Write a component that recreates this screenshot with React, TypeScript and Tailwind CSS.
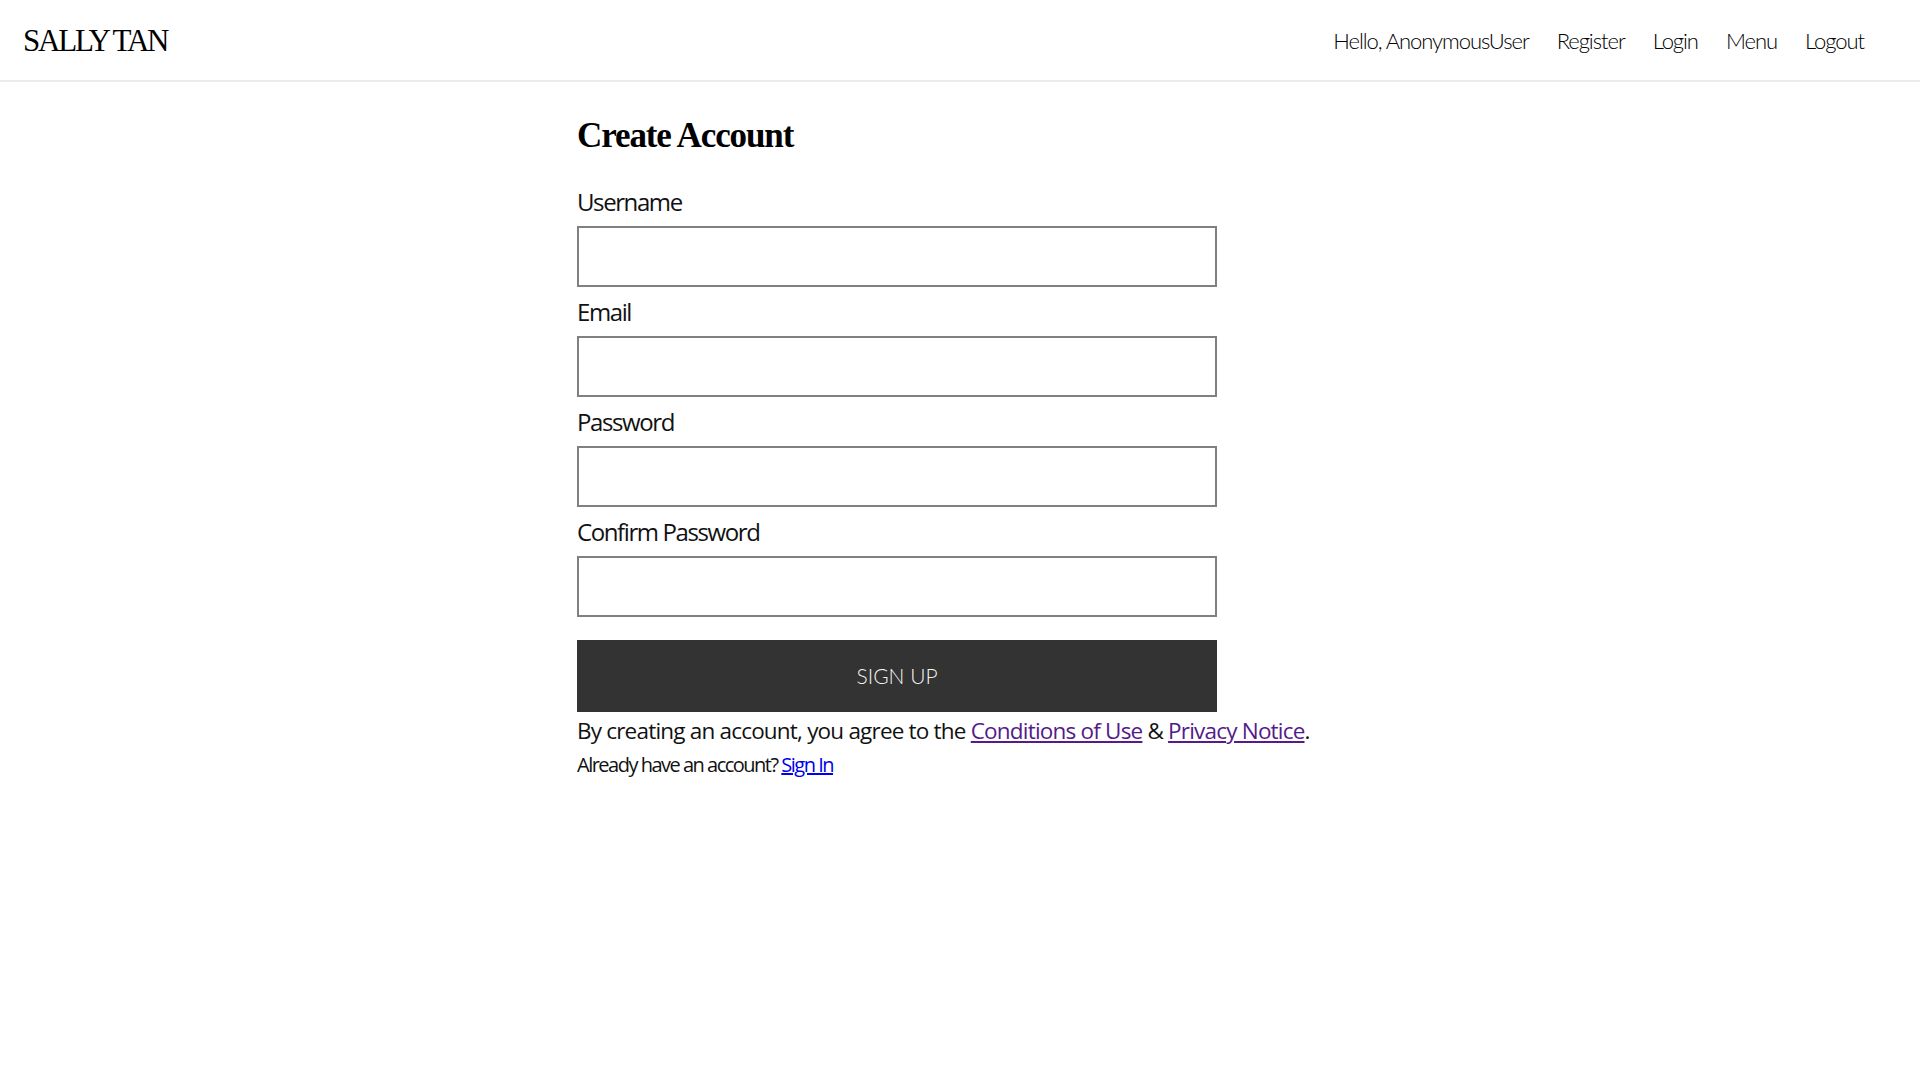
import React from "react";

const fields = [
  { id: "username", label: "Username", type: "text" },
  { id: "email", label: "Email", type: "email" },
  { id: "password", label: "Password", type: "password" },
  { id: "confirm", label: "Confirm Password", type: "password" },
];

const navLinks = ["Register", "Login", "Menu", "Logout"];

export default function App() {
  return (
    <div className="min-h-screen bg-white text-[#111]">
      {/* Top bar */}
      <header className="flex h-[82px] items-center justify-between border-b-2 border-[#ebebeb] pl-[23px] pr-[56px]">
        <a
          href="#"
          className="pt-[3px] font-['Liberation_Serif',serif] text-[31px] tracking-[-2.2px] text-black"
        >
          SALLY TAN
        </a>
        <nav className="flex items-center gap-[28px] font-['Lato',sans-serif] text-[22px] font-light tracking-[-1.05px] text-black">
          <span>Hello, AnonymousUser</span>
          {navLinks.map((l) => (
            <a key={l} href="#">
              {l}
            </a>
          ))}
        </nav>
      </header>

      {/* Sign up form */}
      <main className="ml-[577px] w-[640px] pt-[34px]">
        <h1 className="font-['Liberation_Serif',serif] text-[35px] font-bold leading-[40px] tracking-[-1.1px] text-black">
          Create Account
        </h1>

        <form className="mt-[29px] flex flex-col" onSubmit={(e) => e.preventDefault()}>
          {fields.map((f) => (
            <div key={f.id} className="flex flex-col">
              <label
                htmlFor={f.id}
                className="mb-2 font-['Open_Sans',sans-serif] text-[24px] leading-[33px] tracking-[-1.4px] text-[#111]"
              >
                {f.label}
              </label>
              <input
                id={f.id}
                type={f.type}
                className="h-[61px] w-full border-2 border-[#808080] bg-white px-3 outline-none"
              />
              <div className="h-[8px]" />
            </div>
          ))}

          <button
            type="submit"
            className="mt-[15px] h-[72px] w-full bg-[#333] font-['Lato',sans-serif] text-[21px] font-light text-[#f2f2f2]"
          >
            SIGN UP
          </button>
        </form>

        <p className="mt-[3px] whitespace-nowrap font-['Open_Sans',sans-serif] text-[22.5px] leading-[31px] tracking-[-0.8px] text-[#111]">
          By creating an account, you agree to the{" "}
          <a href="#" className="text-[#551a8b] underline">
            Conditions of Use
          </a>{" "}
          &amp;{" "}
          <a href="#" className="text-[#551a8b] underline">
            Privacy Notice
          </a>
          .
        </p>
        <p className="mt-[5px] font-['Open_Sans',sans-serif] text-[20px] leading-[27px] tracking-[-1.5px] text-[#111]">
          Already have an account?{" "}
          <a href="#" className="text-[#0000ee] underline">
            Sign In
          </a>
        </p>
      </main>
    </div>
  );
}
